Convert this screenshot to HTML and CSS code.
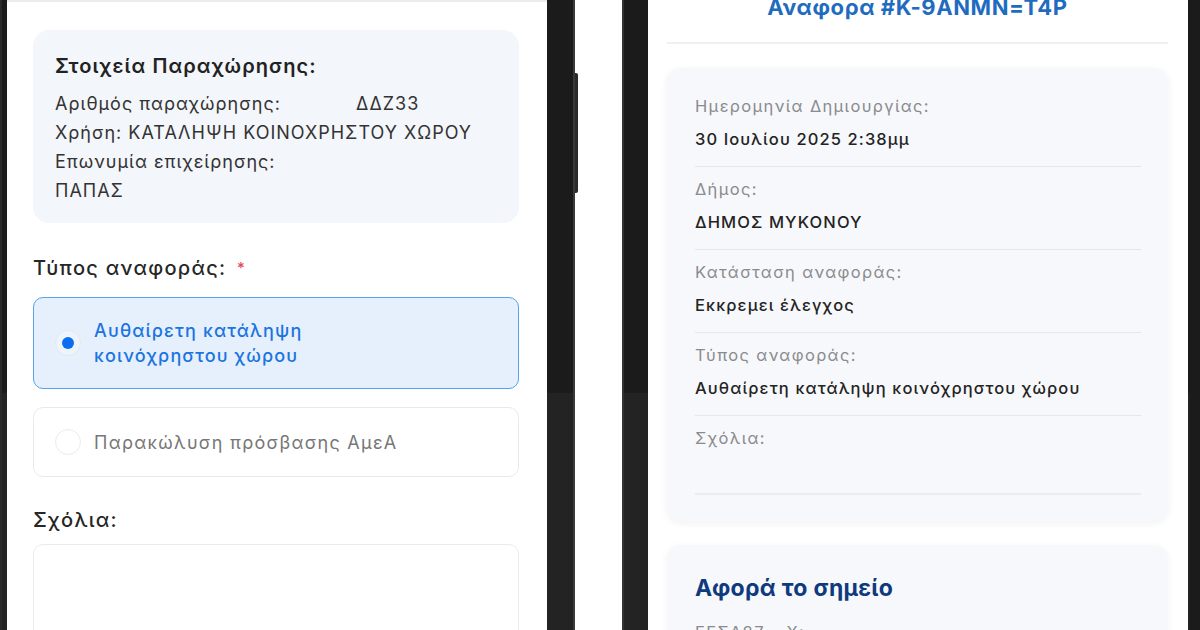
FILE: index.html
```html
<!DOCTYPE html>
<html lang="el">
<head>
<meta charset="utf-8">
<title>Αναφορά</title>
<link rel="stylesheet" href="styles.css">
</head>
<body>
<div class="stage">
  <div class="phone phone-left">
    <div class="side-btn"></div>
    <div class="screen screen-left">
      <div class="info-card">
        <div class="info-title">Στοιχεία Παραχώρησης:</div>
        <div class="info-row"><span class="info-key">Αριθμός παραχώρησης:</span><span class="info-val">ΔΔΖ33</span></div>
        <div class="info-row">Χρήση: ΚΑΤΑΛΗΨΗ ΚΟΙΝΟΧΡΗΣΤΟΥ ΧΩΡΟΥ</div>
        <div class="info-row">Επωνυμία επιχείρησης:</div>
        <div class="info-row">ΠΑΠΑΣ</div>
      </div>

      <div class="field-label">Τύπος αναφοράς: <span class="req">*</span></div>

      <div class="option option-selected">
        <span class="radio radio-on"><span class="radio-dot"></span></span>
        <span class="option-text">Αυθαίρετη κατάληψη κοινόχρηστου χώρου</span>
      </div>
      <div class="option">
        <span class="radio"></span>
        <span class="option-text">Παρακώλυση πρόσβασης ΑμεΑ</span>
      </div>

      <div class="field-label comments-label">Σχόλια:</div>
      <div class="textarea"></div>
    </div>
  </div>

  <div class="phone phone-right">
    <div class="screen screen-right">
      <div class="report-head">
        <div class="report-title">Αναφορα #K-9ANMN=T4P</div>
      </div>

      <div class="detail-card">
        <div class="detail-row">
          <div class="d-label">Ημερομηνία Δημιουργίας:</div>
          <div class="d-value">30 Ιουλίου 2025 2:38μμ</div>
        </div>
        <div class="detail-row">
          <div class="d-label">Δήμος:</div>
          <div class="d-value">ΔΗΜΟΣ ΜΥΚΟΝΟΥ</div>
        </div>
        <div class="detail-row">
          <div class="d-label">Κατάσταση αναφοράς:</div>
          <div class="d-value">Εκκρεμει έλεγχος</div>
        </div>
        <div class="detail-row">
          <div class="d-label">Τύπος αναφοράς:</div>
          <div class="d-value">Αυθαίρετη κατάληψη κοινόχρηστου χώρου</div>
        </div>
        <div class="detail-row detail-last">
          <div class="d-label">Σχόλια:</div>
          <div class="d-value d-empty"></div>
        </div>
      </div>

      <div class="point-card">
        <div class="point-title">Αφορά το σημείο</div>
        <div class="d-label">ΕΓΣΑ87 – Χ:</div>
      </div>
    </div>
  </div>
</div>
</body>
</html>
```

FILE: styles.css
```css
* { box-sizing: border-box; }

html, body {
  margin: 0;
  padding: 0;
  background: #ffffff;
}

body {
  width: 1200px;
  height: 630px;
  overflow: hidden;
  font-family: "Inter", "Roboto", "Noto Sans", sans-serif;
  color: #222;
}

.stage {
  display: flex;
  width: 1200px;
  height: 630px;
}

.phone {
  position: relative;
  height: 630px;
  display: flex;
  background: linear-gradient(#1b1b1b 0, #1b1b1b 393px, #232323 393px, #232323 100%);
}

.phone-left {
  width: 575px;
  padding-left: 7px;
  padding-right: 28px;
  box-shadow: inset -2px 0 0 #3a3a3a, inset 2px 0 0 #2a2a2a;
}

.side-btn {
  position: absolute;
  right: -3px;
  top: 73px;
  width: 3px;
  height: 120px;
  background: #2b2b2b;
  border-radius: 0 2px 2px 0;
}

.phone-right {
  margin-left: 47px;
  width: 578px;
  padding-left: 26px;
  padding-right: 12px;
  box-shadow: inset 2px 0 0 #333, inset -10px 0 0 #1b1b1b;
}

.screen {
  background: #ffffff;
  width: 540px;
  height: 630px;
  overflow: hidden;
}

/* ---------- left screen ---------- */
.screen-left {
  padding: 28px 28px 0 26px;
  border-top: 2px solid #ececec;
}

.info-card {
  background: #f3f6fa;
  border-radius: 16px;
  padding: 24px 22px 18px 22px;
}

.info-title {
  font-size: 20px;
  line-height: 24px;
  font-weight: 600;
  letter-spacing: 1.1px;
  color: #222;
  margin-bottom: 11px;
}

.info-row {
  font-size: 18px;
  line-height: 29px;
  letter-spacing: 1px;
  color: #333;
  white-space: nowrap;
}

.info-key {
  display: inline-block;
  width: 301px;
}

.field-label {
  font-size: 20px;
  line-height: 24px;
  font-weight: 500;
  letter-spacing: 1.3px;
  color: #262626;
  margin-top: 33px;
}

.req {
  color: #e5484d;
  font-size: 15px;
  vertical-align: top;
  margin-left: 4px;
}

.option {
  display: flex;
  align-items: center;
  gap: 13px;
  margin-top: 17px;
  height: 70px;
  padding-left: 21px;
  border: 1px solid #e9e9e9;
  border-radius: 10px;
  background: #fff;
}

.option + .option { margin-top: 18px; }

.option-selected {
  height: 92px;
  background: #e5f0fc;
  border: 1.5px solid #56a2ec;
}

.radio {
  flex: none;
  width: 26px;
  height: 26px;
  border-radius: 50%;
  border: 1.5px solid #ececec;
  background: #fff;
  display: flex;
  align-items: center;
  justify-content: center;
}

.radio-on {
  background: #eef4fb;
  border-color: #e3e9f1;
}

.radio-dot {
  width: 12px;
  height: 12px;
  border-radius: 50%;
  background: #0b6df0;
}

.option-text {
  font-size: 18px;
  line-height: 25px;
  letter-spacing: 1.3px;
  color: #777;
}

.option-selected .option-text {
  color: #1b74df;
  font-weight: 500;
  letter-spacing: 1.15px;
  max-width: 260px;
}

.comments-label { margin-top: 31px; }

.textarea {
  margin-top: 12px;
  height: 120px;
  border: 1.5px solid #ebebeb;
  border-radius: 10px;
  background: #fff;
}

/* ---------- right screen ---------- */
.screen-right {
  padding: 0 20px 0 19px;
}

.report-head {
  border-bottom: 2px solid #eef0f3;
  padding-bottom: 22px;
}

.report-title {
  margin-top: -6px;
  font-size: 22px;
  line-height: 26px;
  font-weight: 700;
  letter-spacing: 0.6px;
  color: #1f6cbf;
  text-align: center;
}

.detail-card {
  margin-top: 24px;
  background: #f7f8fb;
  border-radius: 14px;
  box-shadow: 0 2px 8px rgba(0, 0, 0, 0.06);
  padding: 16px 27px 26px 28px;
}

.detail-row {
  padding-top: 12px;
  padding-bottom: 17px;
  border-bottom: 1px solid #e6e7ea;
}

.detail-last {
  border-bottom: 2px solid #ebecef;
  padding-bottom: 12px;
}

.d-label {
  font-size: 16.5px;
  line-height: 20px;
  letter-spacing: 1.35px;
  color: #8a8b8e;
}

.d-value {
  margin-top: 13px;
  font-size: 16.5px;
  line-height: 20px;
  font-weight: 500;
  letter-spacing: 1.1px;
  color: #232323;
}

.d-empty { min-height: 20px; height: 20px; }

.point-card {
  margin-top: 24px;
  background: #f7f8fb;
  border-radius: 14px;
  box-shadow: 0 2px 8px rgba(0, 0, 0, 0.05);
  padding: 29px 28px 20px 28px;
}

.point-title {
  font-size: 23px;
  line-height: 28px;
  font-weight: 700;
  letter-spacing: 0.3px;
  color: #0f3a7d;
  margin-bottom: 20px;
}
```
